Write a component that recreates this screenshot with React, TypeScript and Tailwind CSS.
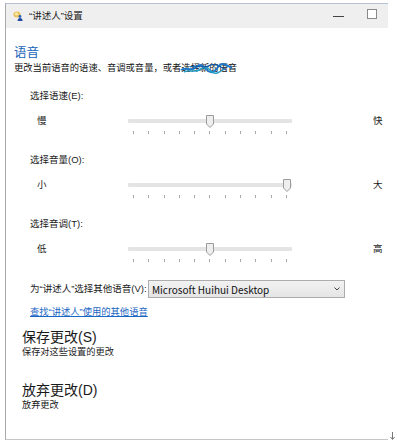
import React from 'react';

const font = { fontFamily: '"Liberation Sans", "Noto Sans CJK SC", sans-serif' };

function Slider({ left, right, thumb }: { left: string; right: string; thumb: string }) {
  return (
    <div className="flex items-start pl-[31px] mt-[11px]">
      <span className="w-[91px] text-[9.5px] leading-[14px] text-[#1a1a1a]">{left}</span>
      <div className="w-[164px]">
        <div className="relative h-[14px] flex items-center">
          <div className="w-full h-[4px] rounded-[1px] bg-[#e4e4e4]" />
          <svg className={`absolute top-[1px] ${thumb}`} width="8" height="13" viewBox="0 0 8 13">
            <path d="M0.5 0.5 H7.5 V9 L4 12.5 L0.5 9 Z" fill="#eeeeee" stroke="#9c9c9c" />
          </svg>
        </div>
        <div className="mt-[3px] px-[5px] flex justify-between">
          {Array.from({ length: 11 }).map((_, i) => (
            <div key={i} className="w-[1px] h-[3px] bg-[#a8a8a8]" />
          ))}
        </div>
      </div>
      <span className="ml-[81px] text-[9.5px] leading-[14px] text-[#1a1a1a]">{right}</span>
    </div>
  );
}

export default function App() {
  return (
    <div className="relative w-[397px] h-[443px] bg-white overflow-hidden" style={font}>
      <div className="ml-[5px] mt-[3px] w-[383px] h-[437px] border-t border-t-[#b4c2d4] border-l border-l-[#a9a9a9] border-b border-b-[#c6c6c6]">
        {/* title bar */}
        <div className="h-[24px] bg-[#efefef] flex items-center pl-[7px] pr-[11px]">
          <svg width="10" height="10" viewBox="0 0 10 10">
            <ellipse cx="4" cy="3.5" rx="3.6" ry="3" fill="#e8c25a" />
            <ellipse cx="3.5" cy="3" rx="1.8" ry="1.4" fill="#f7e7a8" />
            <circle cx="7" cy="5.5" r="1.4" fill="#2c5fb8" />
            <path d="M4.6 10 Q4.8 7 7 7 Q9.4 7 9.6 10 Z" fill="#1f4c9e" />
          </svg>
          <span className="ml-[6px] text-[9.5px] text-[#222]">“讲述人”设置</span>
          <div className="ml-auto w-[11px] h-[1px] bg-[#444] mr-[23px]" />
          <div className="w-[10px] h-[10px] border border-[#8a8a8a] bg-white -mt-[4px]" />
        </div>

        <div className="pl-[8px] mt-[17px] text-[12.5px] leading-[16px] text-[#2063b8]">语音</div>
        <div className="relative pl-[8px] text-[9.3px] leading-[14px] text-[#111]">
          更改当前语音的语速、音调或音量，或者选择新的语音
          <svg className="absolute left-[174px] top-[0px]" width="54" height="14" viewBox="0 0 54 14">
            <path d="M1 9 C6 5 10 11 15 7 S22 3 26 8 S34 12 38 6 S46 4 52 7" fill="none" stroke="#1e78c8" strokeWidth="2" />
            <path d="M4 11 C9 8 14 12 19 9 S27 5 31 10 S40 11 44 8" fill="none" stroke="#24a0c8" strokeWidth="1.5" />
            <path d="M10 6 C16 3 22 8 28 5 S38 4 46 9" fill="none" stroke="#0c5aa8" strokeWidth="1.2" />
          </svg>
        </div>

        <div className="pl-[24px] mt-[14px] text-[9.5px] leading-[14px] text-[#1a1a1a]">选择语速(E):</div>
        <Slider left="慢" right="快" thumb="left-[78px]" />

        <div className="pl-[24px] mt-[19px] text-[9.5px] leading-[14px] text-[#1a1a1a]">选择音量(O):</div>
        <Slider left="小" right="大" thumb="left-[155px]" />

        <div className="pl-[24px] mt-[19px] text-[9.5px] leading-[14px] text-[#1a1a1a]">选择音调(T):</div>
        <Slider left="低" right="高" thumb="left-[78px]" />

        <div className="flex items-center pl-[24px] mt-[18px]">
          <span className="w-[118px] whitespace-nowrap text-[9.5px] leading-[14px] text-[#1a1a1a]">为“讲述人”选择其他语音(V):</span>
          <div className="w-[197px] h-[18px] border border-[#acacac] bg-gradient-to-b from-[#f2f2f2] to-[#e5e5e5] flex items-center pl-[3px] pr-[4px]">
            <span className="text-[10px] text-[#111]" style={{ fontFamily: '"Noto Sans CJK SC", sans-serif' }}>Microsoft Huihui Desktop</span>
            <svg className="ml-auto" width="6" height="4" viewBox="0 0 6 4">
              <path d="M0.5 0.5 L3 3 L5.5 0.5" fill="none" stroke="#444" strokeWidth="1" />
            </svg>
          </div>
        </div>

        <div className="pl-[24px] mt-[7px] text-[9.3px] leading-[14px] text-[#1a66c4] underline">查找“讲述人”使用的其他语音</div>

        <div className="pl-[16px] mt-[10px] text-[14px] leading-[16px] text-[#1a1a1a]">保存更改(S)</div>
        <div className="pl-[16px] mt-[2px] text-[9.2px] leading-[11px] text-[#1a1a1a]">保存对这些设置的更改</div>

        <div className="pl-[16px] mt-[24px] text-[14px] leading-[16px] text-[#1a1a1a]">放弃更改(D)</div>
        <div className="pl-[16px] mt-[2px] text-[9.2px] leading-[11px] text-[#1a1a1a]">放弃更改</div>
      </div>
      <svg className="absolute left-[390px] top-[432px]" width="5" height="8" viewBox="0 0 5 8">
        <path d="M2.5 0 V7 M0.5 5 L2.5 7.5 L4.5 5" fill="none" stroke="#777" strokeWidth="1" />
      </svg>
    </div>
  );
}
